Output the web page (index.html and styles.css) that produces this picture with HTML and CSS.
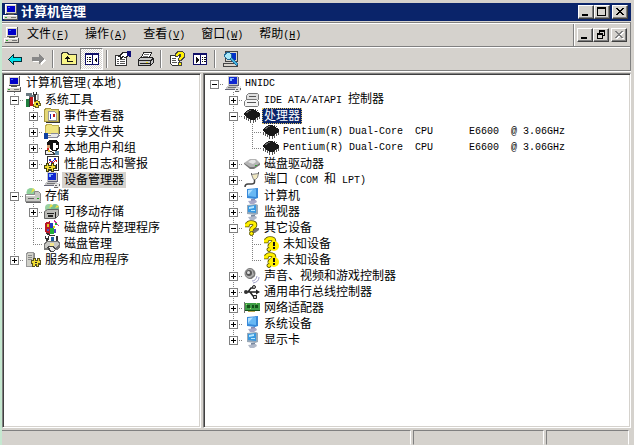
FILE: index.html
```html
<!DOCTYPE html>
<html lang="zh-CN">
	<head>
		<meta charset="utf-8" />
		<title>计算机管理</title>
		<link rel="stylesheet" href="styles.css">
	</head>
	<body>
		<!-- 图标 -->
		<svg class="defs" aria-hidden="true">
			<symbol id="pc" viewBox="0 0 16 16">
				<path fill="#d8d4cc" d="M2 0h11v10H2zM0 11h14v4H0z"/>
				<path fill="#fff" d="M2 0h11v1H3v9H2zM0 11h14v1H1v3H0z"/>
				<path fill="#555" d="M13 0h1v10H3V9h10zM5 10h6v1H5zM14 11h1v5H1v-1h13z"/>
				<path fill="#0000c8" d="M4 2h8v6H4z"/>
				<path fill="#3c64ff" d="M5 3h2v1H5z"/>
				<path fill="#777" d="M8 13h5v1H8z"/>
				<path fill="#3a3" d="M2 13h2v1H2z"/>
			</symbol>
			<symbol id="device" viewBox="0 0 16 16">
				<path fill="#c8c8c8" d="M3 0h10v10H3zM2 10h11l2 4H0z"/>
				<path fill="#667" d="M13 1h1v9H4V9h9zM0 13h11v1H0z"/>
				<path fill="#1028d0" d="M4 1h8v7H4z"/>
				<path fill="#88b8ff" d="M5 2h4v1H5zM5 3h2v2H5z"/>
				<path fill="#777" d="M3 11h8v1H3z"/>
				<path fill="#e8e8e8" d="M10 12h3l2-2h1v4l-2 2h-4z"/>
				<path fill="#666" d="M10 15h4v1h-4zM15 12h1v2h-1zM11 13h2v1h-2z"/>
			</symbol>
			<symbol id="tools" viewBox="0 0 16 16">
				<path fill="#687880" d="M1 1h6v2h2v2H6v2H4V4H1z"/>
				<path fill="#208040" d="M1 7h3v8H1z"/>
				<path fill="#c01818" d="M5 5h3v9H5z"/>
				<path fill="#333" d="M4 6h1v9H4zM9 2h2v7H9zM11 0h1v3h-1zM8 0h1v3H8z"/>
				<path fill="#aaa" d="M12 2h2v6h-2z"/>
				<path fill="#666020" d="M9 9h2V8h2v1h2v2h1v3h-2v2h-4v-1H8v-3h1z"/>
				<path fill="#f0dc30" d="M9 10h2V9h2v1h1v2h1v1h-2v2h-2v-1H9z"/>
				<path fill="#222" d="M11 11h2v2h-2z"/>
			</symbol>
			<symbol id="event" viewBox="0 0 16 16">
				<path fill="#e4d878" stroke="#a89840" d="M.5 2.500l1-2h5l1 1h7v12H.5z"/>
				<path fill="#333" d="M15 3h1v12H2v-1h13z"/>
				<path fill="#fff" stroke="#999" d="M4.500 3.500h6l2 2v7h-8z"/>
				<path fill="#c01818" d="M9 6h2v3H9z"/>
				<path fill="#1830c0" d="M6 6h1v5H6z"/>
			</symbol>
			<symbol id="share" viewBox="0 0 16 16">
				<path fill="#f0e480" stroke="#c0b050" d="M1.500 2.500l1-2h5l1 1h6v8h-13z"/>
				<path fill="#555" d="M15 3h1v7h-1z"/>
				<path fill="#1040a0" d="M0 9h4v6H0z"/>
				<path fill="#889" d="M4 11h3V9h6l3 2v1l-3 2H4z"/>
				<path fill="#e8e8e8" d="M4 12h3v-2h5l3 1-3 2H4z"/>
			</symbol>
			<symbol id="users" viewBox="0 0 16 16">
				<path fill="#111" d="M5 0h8l2 3v5l-2 3H8L6 8 3 6V2z"/>
				<path fill="#fff" d="M9 3h3v2h2v3h-2v2H9z"/>
				<path fill="#d8a070" d="M3 5h3v3H3z"/>
				<path fill="#d82020" d="M3 8h2v3H3z"/>
				<path fill="#333" d="M1 10h4l6 3v2H1z"/>
				<path fill="#f0f0f0" d="M2 11h3l4 2v1H2z"/>
				<path fill="#e8c828" d="M4 10h2v2H4z"/>
				<path fill="#6090b0" d="M11 11h4v4h-4z"/>
			</symbol>
			<symbol id="perf" viewBox="0 0 16 16">
				<path fill="#fff" stroke="#333" d="M3.500.5h11v14h-11z"/>
				<path fill="none" stroke="#2030d0" d="M5 5l1-2 2 4 3-5 2 4"/>
				<path fill="none" stroke="#d02020" d="M5 7l2-2 2 2 3-3 1 2"/>
				<path fill="#444010" d="M0 9h2V7h3v2h2V7h3v2h2v4h-2v3H7v-2H5v2H2v-3H0z"/>
				<path fill="#f0dc30" d="M1 10h2V8h1v2h4V8h1v2h2v2H9v3H8v-2H4v2H3v-3H1z"/>
				<path fill="#222" d="M5 11h2v1H5zM12 8h1v5h-1z"/>
			</symbol>
			<symbol id="storage" viewBox="0 0 16 16" shape-rendering="auto">
				<circle cx="6" cy="4.500" r="4.500" fill="#8fd09c"/>
				<path fill="#e8e048" d="M6 5l2-5 2 2z"/>
				<path fill="#c8c8c4" stroke="#888" d="M.5 6.500h9v-3h4l2 2v8h-15z"/>
				<path fill="#fff" d="M1 7h9v1H1z"/>
				<path fill="#666" d="M3 10h6v1H3zM1 14h15v1H1z"/>
				<path fill="#2a2" d="M12 10h2v1h-2z"/>
			</symbol>
			<symbol id="removable" viewBox="0 0 16 16" shape-rendering="auto">
				<circle cx="5" cy="4" r="4" fill="#98d0a0"/>
				<circle cx="11" cy="4" r="4" fill="#78c090"/>
				<path fill="#f0e040" d="M5 4l2-4 2 2zM11 4l2-3 2 2z"/>
				<path fill="#bcbcb8" stroke="#666" d="M.5 7.500l3-2h11v6l-3 3H.5z"/>
				<path fill="#222" d="M3 9h7v1H3zM4 11h5v2H4zM11 8h1v6h-1z"/>
			</symbol>
			<symbol id="defrag" viewBox="0 0 16 16">
				<path fill="#b81828" d="M1 3l5-2v13l-5-2z"/>
				<path fill="#2038c0" d="M6 3h3v5H6z"/>
				<path fill="#d028a0" d="M10 0l3 2-1 1-3-2zM13 4l2 1-1 1z"/>
				<path fill="#20b038" d="M6 8h4v6H6zM11 3h2v2h-2z"/>
				<path fill="#e8c820" d="M3 4h2v3H3zM9 6h2v2H9z"/>
				<path fill="#333" d="M1 13h3l3 2h4v1H6z"/>
				<path fill="#5048c0" d="M10 9h2v4h-2zM3 9h2v2H3z"/>
			</symbol>
			<symbol id="diskmgmt" viewBox="0 0 16 16">
				<path fill="#333" d="M1 0h1v2h2V0h1v3L4 5v2H2V4L1 3zM12 0h2v7h-2z"/>
				<path fill="#2060a0" d="M7 1h3v3l-1 4H8z"/>
				<path fill="#777" d="M0 7l3-2h11l2 2v4l-3 3H0z"/>
				<path fill="#c8c8c4" d="M1 8l3-2h10l1 2-3 4H1z"/>
				<path fill="#f4e890" d="M6 7h4v3H6z"/>
				<path fill="#444" d="M3 11l2-1h4l3 2-2 4H6z"/>
				<path fill="#eee" d="M5 11h3l3 2-2 2H7z"/>
			</symbol>
			<symbol id="services" viewBox="0 0 16 16">
				<path fill="#d0d0c8" stroke="#999" d="M1.500 1.500l2-1h5v14h-7z"/>
				<path fill="#888" d="M3 3h4v1H3zM3 5h4v1H3zM3 7h4v1H3zM9 1h1v13H9z"/>
				<path fill="#555020" d="M6 8h2V6h3v2h1V6h3v2h1v5h-2v2h-3v-1h-1v1H7v-3H6z"/>
				<path fill="#f0dc30" d="M7 9h2V7h1v2h3V7h1v2h1v2h-2v3h-1v-2h-2v2H8v-3H7z"/>
				<path fill="#222" d="M10 10h2v1h-2z"/>
			</symbol>
			<symbol id="ide" viewBox="0 0 16 16" shape-rendering="auto">
				<path fill="#e0e0e0" stroke="#777" d="M2.500 3.500l2-2h9l1 1v5l-2 2h-10z"/>
				<path fill="#f4f4f4" stroke="#777" d="M1.500 8.500l1-1h10l2 2v4l-1 1h-12l-1-1v-4z"/>
				<path fill="#555" d="M3 10h9v1H3zM5 4h7v1H5z"/>
			</symbol>
			<symbol id="chip" viewBox="0 0 16 16">
				<path fill="#181818" d="M6 1h3l7 4v3l-6 4H7L0 7V5z"/>
				<path fill="#666" d="M6 2h2L3 5H1z"/>
				<path fill="#555" d="M0 8h1v3H0zM2 9h1v3H2zM4 10h1v3H4zM6 12h1v3H6zM9 12h1v3H9zM11 11h1v3h-1zM13 9h1v3h-1zM15 8h1v3h-1zM3 2h1v1H3zM11 1h1v1h-1zM13 2h1v1h-1z"/>
			</symbol>
			<symbol id="disk" viewBox="0 0 16 16" shape-rendering="auto">
				<path fill="#777" d="M0 8l6 5h4l6-4V7H0z"/>
				<path fill="#b4b4b4" d="M0 7l6-4h6l4 4-6 4H6z"/>
				<path fill="#e4e4e4" d="M4 6l3-2h4l1 2-3 2z"/>
				<path fill="#3a3" d="M11 9h2v1h-2z"/>
			</symbol>
			<symbol id="port" viewBox="0 0 16 16" shape-rendering="auto">
				<path fill="#f0e8c0" stroke="#888" d="M7.500 2.500l7-1-1 4-2 2h-2z"/>
				<path fill="#666" d="M7 1h1v2H7zM14 0h1v2h-1z"/>
				<path fill="none" stroke="#444" stroke-width="1.500" d="M10.500 8v2q0 2-3 2H4q-3 0-3 3"/>
			</symbol>
			<symbol id="lcd" viewBox="0 0 16 16" shape-rendering="auto">
				<path fill="#3888d8" d="M3 1l11-1v10l-3 1-8-1z"/>
				<path fill="#68b8f4" d="M4 2l8-1v8l-8-1z"/>
				<path fill="#b0e0ff" d="M4 2l5-.5L4 7z"/>
				<path fill="#8888b0" d="M7 11h4v2H7z"/>
				<path fill="#a8a8c8" d="M4 13l8-1 1 2-3 2H6z"/>
			</symbol>
			<symbol id="monitor" viewBox="0 0 16 16" shape-rendering="auto">
				<path fill="#98a8b8" d="M3 1l9-1 2 1v9l-3 1-8-1z"/>
				<path fill="#3898e0" d="M4 2l8-1v8l-8-1z"/>
				<path fill="#b8e8ff" d="M5 3l5-1v2L5 5zM7 6h4v1H7z"/>
				<path fill="#7888a0" d="M7 11h4v2H7z"/>
				<path fill="#b0b8c8" d="M4 13l8-1 1 2-3 2H6z"/>
			</symbol>
			<symbol id="question" viewBox="0 0 16 16" shape-rendering="auto">
				<path fill="#777" d="M10 8h5v2l-4 3H8v-2z"/>
				<path fill="none" stroke="#5a5400" stroke-width="4.500" d="M1 5h2.500Q4 2.500 7 2.500q4 0 4 2.500 0 1.500-2 2.500T7.500 11"/>
				<path fill="none" stroke="#fff000" stroke-width="3" d="M1 5h2.500Q4 2.500 7 2.500q4 0 4 2.500 0 1.500-2 2.500T7.500 11"/>
				<circle cx="7.500" cy="13.500" r="2" fill="#fff000" stroke="#5a5400"/>
			</symbol>
			<symbol id="unknown" viewBox="0 0 16 16" shape-rendering="auto">
				<path fill="none" stroke="#5a5400" stroke-width="4.500" d="M1 5h2.500Q4 2.500 7 2.500q4 0 4 2.500 0 1.500-2 2.500T6.500 11"/>
				<path fill="none" stroke="#fff000" stroke-width="3" d="M1 5h2.500Q4 2.500 7 2.500q4 0 4 2.500 0 1.500-2 2.500T6.500 11"/>
				<circle cx="6" cy="13.500" r="2" fill="#fff000" stroke="#5a5400"/>
				<circle cx="11" cy="10" r="5" fill="#fff000"/>
				<path fill="#111" d="M10 6h2v4h-2zM10 11h2v2h-2z"/>
			</symbol>
			<symbol id="sound" viewBox="0 0 16 16" shape-rendering="auto">
				<circle cx="6" cy="5.500" r="5" fill="#b0b0b0" stroke="#777"/>
				<path fill="#777" d="M8 1l3 3v4l-4 3H5l5-4z"/>
				<circle cx="5" cy="5" r="3" fill="#555"/>
				<circle cx="4.500" cy="4.500" r="1.500" fill="#ddd"/>
				<path fill="none" stroke="#a0a0c8" d="M8 13q4 0 5-5M9 15q6-1 6-6"/>
			</symbol>
			<symbol id="usb" viewBox="0 0 16 16" shape-rendering="auto">
				<path fill="none" stroke="#222" stroke-width="1.500" d="M2 8h12M4 8l3-4h2M6 8l3 4h2"/>
				<circle cx="2" cy="8" r="2" fill="#333"/>
				<circle cx="10" cy="3" r="1.500" fill="#ccc" stroke="#222"/>
				<path fill="#222" d="M12 5.500l4 2.500-4 2.500z"/>
				<path fill="#ccc" stroke="#222" d="M9.500 11.500h3v3h-3z"/>
			</symbol>
			<symbol id="net" viewBox="0 0 16 16">
				<path fill="#3c9c44" d="M1 3h15v8H1z"/>
				<path fill="#134f18" d="M3 5h3v3H3zM8 5h2v3H8zM11 5h3v3h-3zM1 10h15v1H1z"/>
				<path fill="#b0d870" d="M2 4h1v1H2zM6 8h1v1H6zM12 3h1v1h-1z"/>
				<path fill="#777" d="M0 2h1v11H0z"/>
				<path fill="#b8a850" d="M4 11h7v1H4z"/>
			</symbol>
			<!-- 工具栏 -->
			<symbol id="back" viewBox="0 0 16 16">
				<path fill="#003038" d="M1 8l5-5h1v3h8v5H7v3H6L1 9z"/>
				<path fill="#00e0e8" d="M2 8l4-4v3h8v3H6v3L2 9z"/>
			</symbol>
			<symbol id="forward" viewBox="0 0 16 16">
				<path fill="#fff" d="M16 9l-5 5v-3H3V8h8V5z"/>
				<path fill="#888" d="M15 8l-6 5v-3H2V6h7V3z"/>
			</symbol>
			<symbol id="up" viewBox="0 0 16 16">
				<path fill="#f8f488" stroke="#333" d="M.5 3.500l1-2h5l1 2h8v10H.5z"/>
				<path fill="#111" d="M6 5h1v1h1v1h1v1H7v2h5v1H6V8H4V7h1V6h1z"/>
			</symbol>
			<symbol id="tree" viewBox="0 0 16 16">
				<path fill="#fff" stroke="#101068" d="M1.500 2.500h13v11h-13z"/>
				<path fill="#101068" d="M1 2h14v2H1zM8 4h1v10H8z"/>
				<path fill="#111" d="M3 6h1v1H3zM5 6h2v1H5zM3 8h1v1H3zM5 8h2v1H5zM3 10h1v1H3zM5 10h2v1H5zM13 6v6l-3-3z"/>
			</symbol>
			<symbol id="action" viewBox="0 0 16 16">
				<path fill="#fff" stroke="#101068" d="M1.500 2.500h13v11h-13z"/>
				<path fill="#101068" d="M1 2h14v2H1zM8 4h1v10H8z"/>
				<path fill="#111" d="M10 6h1v1h-1zM12 6h2v1h-2zM10 8h1v1h-1zM12 8h2v1h-2zM10 10h1v1h-1zM12 10h2v1h-2zM4 6v6l3-3z"/>
			</symbol>
			<symbol id="props" viewBox="0 0 16 16">
				<path fill="#fff" stroke="#333" d="M.5 4.500h11v10H.5z"/>
				<path fill="#555" d="M2 8h2v1H2zM5 8h5v1H5zM2 10h2v1H2zM5 10h5v1H5zM2 12h2v1H2zM5 12h5v1H5z"/>
				<path fill="#222" d="M3 5l5-4h5v5l-3 1-2-1-2 2H5V6H3z"/>
				<path fill="#fff" d="M5 5l3-3h4v3l-2 1-2-1-2 1z"/>
				<path fill="#101078" d="M12 0h4v6h-2V5h-2z"/>
			</symbol>
			<symbol id="print" viewBox="0 0 16 16">
				<path fill="#fff" stroke="#222" d="M3.500 6.500l2-5h8l-2 5z"/>
				<path fill="#777" d="M6 3h5v1H6zM5 5h5v1H5z"/>
				<path fill="#c8c8c8" stroke="#222" d="M.5 8.500l2-2h12l1 1v4l-3 3H.5z"/>
				<path fill="#222" d="M1 9h11v1H1zM12 9l3-2v1l-2 2v4h-1zM2 12h10v1H2z"/>
				<path fill="#e8d820" d="M8 11h2v1H8z"/>
			</symbol>
			<symbol id="help" viewBox="0 0 16 16">
				<path fill="#fff" stroke="#333" d="M1.500 4.500h9v10h-7l-2-2z"/>
				<path fill="#555" d="M3 7h4v1H3zM3 9h4v1H3zM3 11h5v1H3z"/>
				<path fill="#444" d="M6 2l2-2h5l3 2v4l-3 3v1H9V7l2-2V4h-1L9 6H6zM9 11h4v4H9z"/>
				<path fill="#fff000" d="M7 3l2-2h4l2 2v2l-3 3v1h-2V8l2-3V3h-2L8 5H7zM10 12h2v2h-2z"/>
			</symbol>
			<symbol id="scan" viewBox="0 0 16 16">
				<path fill="#d8d4cc" stroke="#444" d="M2.500.5h12v10h-12zM.5 12.500h14v3H.5z"/>
				<path fill="#0030c8" d="M4 2h9v7H4z"/>
				<path fill="#206898" d="M1 3l2-2h3l3 3v3l6 6-2 2-6-6H4L1 6z"/>
				<path fill="#a8e8f8" d="M2 4l2-2h2l2 2v2L6 8H4L2 6z"/>
				<path fill="#48b8e0" d="M8 7l6 6-1 1-6-6z"/>
			</symbol>
			<!-- 窗口按钮 -->
			<symbol id="min" viewBox="0 0 12 10"><path d="M2 7h6v2H2z"/></symbol>
			<symbol id="max" viewBox="0 0 12 10"><path d="M1 0h9v9H1zM2 2v6h7V2z" fill-rule="evenodd"/></symbol>
			<symbol id="restore" viewBox="0 0 12 10"><path d="M4 0h6v6H8V5h1V2H5v1H4zM2 3h6v6H2zM3 5v3h4V5z" fill-rule="evenodd"/></symbol>
			<symbol id="close" viewBox="0 0 12 10"><path d="M2 1h2v1h1v1h2V2h1V1h2v1H9v1H8v1H7v1h1v1h1v1h1v1H8V7H7V6H5v1H4v1H2V7h1V6h1V5h1V4H4V3H3V2H2z"/></symbol>
		</svg>

		<div class="window">
			<header class="title-bar">
				<svg class="icon"><use href="#pc"/></svg>
				<h1>计算机管理</h1>
				<div class="win-btns">
					<button aria-label="最小化"><svg><use href="#min"/></svg></button>
					<button aria-label="最大化"><svg><use href="#max"/></svg></button>
					<button class="close" aria-label="关闭"><svg><use href="#close"/></svg></button>
				</div>
			</header>

			<nav class="menu-bar">
				<svg class="icon"><use href="#pc"/></svg>
				<div class="menus">
					<button>文件<span class="en">(<u>F</u>)</span></button>
					<button>操作<span class="en">(<u>A</u>)</span></button>
					<button>查看<span class="en">(<u>V</u>)</span></button>
					<button>窗口<span class="en">(<u>W</u>)</span></button>
					<button>帮助<span class="en">(<u>H</u>)</span></button>
				</div>
				<div class="win-btns child">
					<button aria-label="最小化子窗口"><svg><use href="#min"/></svg></button>
					<button aria-label="还原子窗口"><svg><use href="#restore"/></svg></button>
					<button class="close" aria-label="关闭子窗口" disabled><svg><use href="#close"/></svg></button>
				</div>
			</nav>

			<div class="tool-bar">
				<button aria-label="后退"><svg class="icon"><use href="#back"/></svg></button>
				<button aria-label="前进"><svg class="icon"><use href="#forward"/></svg></button>
				<i class="sep"></i>
				<button aria-label="上一级"><svg class="icon"><use href="#up"/></svg></button>
				<button class="pressed" aria-label="显示/隐藏控制台树"><svg class="icon"><use href="#tree"/></svg></button>
				<i class="sep"></i>
				<button aria-label="属性"><svg class="icon"><use href="#props"/></svg></button>
				<button aria-label="打印"><svg class="icon"><use href="#print"/></svg></button>
				<i class="sep"></i>
				<button aria-label="帮助"><svg class="icon"><use href="#help"/></svg></button>
				<button aria-label="显示/隐藏操作窗格"><svg class="icon"><use href="#action"/></svg></button>
				<i class="sep"></i>
				<button aria-label="扫描检测硬件改动"><svg class="icon"><use href="#scan"/></svg></button>
			</div>

			<main class="panes">
				<section class="pane side">
					<div class="row root"><svg class="icon"><use href="#pc"/></svg><span class="label">计算机管理<span class="en">(</span>本地<span class="en">)</span></span></div>
					<ul class="tree">
						<li>
							<div class="row"><button class="exp minus" aria-label="折叠"></button><svg class="icon"><use href="#tools"/></svg><span class="label">系统工具</span></div>
							<ul>
								<li><div class="row"><button class="exp" aria-label="展开"></button><svg class="icon"><use href="#event"/></svg><span class="label">事件查看器</span></div></li>
								<li><div class="row"><button class="exp" aria-label="展开"></button><svg class="icon"><use href="#share"/></svg><span class="label">共享文件夹</span></div></li>
								<li><div class="row"><button class="exp" aria-label="展开"></button><svg class="icon"><use href="#users"/></svg><span class="label">本地用户和组</span></div></li>
								<li><div class="row"><button class="exp" aria-label="展开"></button><svg class="icon"><use href="#perf"/></svg><span class="label">性能日志和警报</span></div></li>
								<li><div class="row leaf"><svg class="icon"><use href="#device"/></svg><span class="label current">设备管理器</span></div></li>
							</ul>
						</li>
						<li>
							<div class="row"><button class="exp minus" aria-label="折叠"></button><svg class="icon"><use href="#storage"/></svg><span class="label">存储</span></div>
							<ul>
								<li><div class="row"><button class="exp" aria-label="展开"></button><svg class="icon"><use href="#removable"/></svg><span class="label">可移动存储</span></div></li>
								<li><div class="row leaf"><svg class="icon"><use href="#defrag"/></svg><span class="label">磁盘碎片整理程序</span></div></li>
								<li><div class="row leaf"><svg class="icon"><use href="#diskmgmt"/></svg><span class="label">磁盘管理</span></div></li>
							</ul>
						</li>
						<li><div class="row"><button class="exp" aria-label="展开"></button><svg class="icon"><use href="#services"/></svg><span class="label">服务和应用程序</span></div></li>
					</ul>
				</section>

				<section class="pane">
					<ul class="tree">
						<li>
							<div class="row"><button class="exp minus" aria-label="折叠"></button><svg class="icon"><use href="#device"/></svg><span class="label en">HNIDC</span></div>
							<ul>
								<li><div class="row"><button class="exp" aria-label="展开"></button><svg class="icon"><use href="#ide"/></svg><span class="label"><span class="en">IDE ATA/ATAPI </span>控制器</span></div></li>
								<li>
									<div class="row"><button class="exp minus" aria-label="折叠"></button><svg class="icon"><use href="#chip"/></svg><span class="label selected">处理器</span></div>
									<ul>
										<li><div class="row leaf"><svg class="icon"><use href="#chip"/></svg><span class="label en">Pentium(R) Dual-Core  CPU      E6600  @ 3.06GHz</span></div></li>
										<li><div class="row leaf"><svg class="icon"><use href="#chip"/></svg><span class="label en">Pentium(R) Dual-Core  CPU      E6600  @ 3.06GHz</span></div></li>
									</ul>
								</li>
								<li><div class="row"><button class="exp" aria-label="展开"></button><svg class="icon"><use href="#disk"/></svg><span class="label">磁盘驱动器</span></div></li>
								<li><div class="row"><button class="exp" aria-label="展开"></button><svg class="icon"><use href="#port"/></svg><span class="label">端口<span class="en"> (COM </span>和<span class="en"> LPT)</span></span></div></li>
								<li><div class="row"><button class="exp" aria-label="展开"></button><svg class="icon"><use href="#lcd"/></svg><span class="label">计算机</span></div></li>
								<li><div class="row"><button class="exp" aria-label="展开"></button><svg class="icon"><use href="#monitor"/></svg><span class="label">监视器</span></div></li>
								<li>
									<div class="row"><button class="exp minus" aria-label="折叠"></button><svg class="icon"><use href="#question"/></svg><span class="label">其它设备</span></div>
									<ul>
										<li><div class="row leaf"><svg class="icon"><use href="#unknown"/></svg><span class="label">未知设备</span></div></li>
										<li><div class="row leaf"><svg class="icon"><use href="#unknown"/></svg><span class="label">未知设备</span></div></li>
									</ul>
								</li>
								<li><div class="row"><button class="exp" aria-label="展开"></button><svg class="icon"><use href="#sound"/></svg><span class="label">声音、视频和游戏控制器</span></div></li>
								<li><div class="row"><button class="exp" aria-label="展开"></button><svg class="icon"><use href="#usb"/></svg><span class="label">通用串行总线控制器</span></div></li>
								<li><div class="row"><button class="exp" aria-label="展开"></button><svg class="icon"><use href="#net"/></svg><span class="label">网络适配器</span></div></li>
								<li><div class="row"><button class="exp" aria-label="展开"></button><svg class="icon"><use href="#lcd"/></svg><span class="label">系统设备</span></div></li>
								<li><div class="row"><button class="exp" aria-label="展开"></button><svg class="icon"><use href="#monitor"/></svg><span class="label">显示卡</span></div></li>
							</ul>
						</li>
					</ul>
				</section>
			</main>

			<footer class="status-bar">
				<div></div>
				<div></div>
				<div></div>
			</footer>
		</div>
	</body>
</html>
```

FILE: styles.css
```css
*{margin: 0;padding: 0;box-sizing: border-box;}
body{
	font: 12px/16px "Liberation Sans", "Noto Sans CJK SC", sans-serif;
	color: #000;
	background-color: #d5d2cd;
}
ul{list-style: none;}
button{font: inherit;color: inherit;background: none;border: 0;}
.defs{display: none;}
.icon{width: 16px;height: 16px;flex: none;shape-rendering: crispEdges;}
/* 半角字符宽6px，为汉字的一半 */
.en{font-family: "Liberation Mono", monospace;font-size: 10px;white-space: pre;}

.window{
	display: flex;
	flex-direction: column;
	min-height: 100vh;
	padding: 3px 3px 0 0;
	border-left: 2px solid #c5e8d0;
	overflow: hidden;
}

/* 标题栏 */
.title-bar{
	display: flex;
	align-items: center;
	height: 18px;
	padding: 0 3px 0 1px;
	background-color: #0a246a;
	color: #fff;
}
.title-bar h1{font-size: 13px;line-height: 18px;padding-left: 2px;flex: 1;}
.win-btns{display: flex;}
.win-btns button{
	width: 16px;height: 14px;
	padding: 1px;
	background-color: #d5d2cd;
	border: 1px solid;
	border-color: #fff #404040 #404040 #fff;
	box-shadow: inset -1px -1px #808080;
}
.win-btns svg{display: block;width: 12px;height: 10px;shape-rendering: crispEdges;}
.win-btns .close{margin-left: 2px;}
.win-btns button:disabled{color: #808080;}
.win-btns button:disabled svg{fill: #808080;filter: drop-shadow(1px 1px #fff);}

/* 菜单栏 */
.menu-bar{
	display: flex;
	align-items: center;
	height: 25px;
	margin-top: 1px;
	padding-left: 2px;
	border: 1px solid #808080;
	border-width: 1px 1px 1px 0;
	box-shadow: inset 0 1px #fff;
}
.menus{display: flex;flex: 1;gap: 16px;padding-left: 7px;}
.child{
	align-self: stretch;
	align-items: center;
	margin-top: 1px;
	padding: 0 3px;
	border-left: 1px solid #808080;
	box-shadow: inset 1px 0 #fff;
}

/* 工具栏 */
.tool-bar{
	display: flex;
	align-items: center;
	height: 24px;
	padding-left: 1px;
	border: 1px solid #808080;
	border-width: 0 1px 1px 0;
	box-shadow: inset 0 1px #fff, 0 1px #fff;
}
.tool-bar button{display: grid;place-items: center;width: 23px;height: 22px;}
.tool-bar .pressed{
	background: repeating-conic-gradient(#fff 0 25%, #d5d2cd 0 50%) 0 0/2px 2px;
	border: 1px solid;
	border-color: #808080 #fff #fff #808080;
}
.sep{
	width: 2px;height: 18px;
	margin: 0 3px;
	border-left: 1px solid #808080;
	border-right: 1px solid #fff;
}

/* 左右窗格 */
.panes{
	display: grid;
	grid-template-columns: 199px 1fr;
	gap: 2px;
	flex: 1;
	padding-top: 2px;
}
.pane{
	background-color: #fff;
	border: 1px solid;
	border-color: #808080 #fff #fff #808080;
	box-shadow: inset 1px 1px #404040, inset -1px -1px #d5d2cd;
	padding: 2px 2px 0 1px;
	overflow: hidden;
}
.side{padding-left: 2px;}

/* 树 */
.tree ul{padding-left: 19px;}
.tree li{
	background: repeating-linear-gradient(#808080 0 1px, transparent 1px 2px) 9px 0/1px 100% no-repeat;
}
.tree li:last-child{background-size: 1px 8px;}
.tree > li:only-child{background: none;}
.row{
	display: flex;
	align-items: center;
	height: 16px;
	white-space: nowrap;
	background: repeating-linear-gradient(90deg, #808080 0 1px, transparent 1px 2px) 9px 8px/10px 1px no-repeat;
}
.root{background: none;padding-left: 1px;}
.leaf{padding-left: 20px;}
.label{line-height: 16px;padding: 0 2px;margin-left: 2px;}
.exp{
	width: 9px;height: 9px;
	margin: 0 6px 0 5px;
	flex: none;
	border: 1px solid #808080;
	background:
		linear-gradient(#000, #000) 1px 3px/5px 1px no-repeat,
		linear-gradient(#000, #000) 3px 1px/1px 5px no-repeat,
		#fff;
}
.minus{background: linear-gradient(#000, #000) 1px 3px/5px 1px no-repeat, #fff;}
.current{background-color: #d5d2cd;}
.selected{background-color: #0a246a;color: #fff;outline: 1px dotted #e0c060;outline-offset: -1px;}

/* 状态栏 */
.status-bar{
	display: grid;
	grid-template-columns: 1fr 131px 83px;
	gap: 2px;
	height: 17px;
	padding: 2px 2px 0 0;
}
.status-bar div{
	border: 1px solid;
	border-color: #808080 #fff transparent #808080;
}
.status-bar div:first-child{border-left: 0;}
```
